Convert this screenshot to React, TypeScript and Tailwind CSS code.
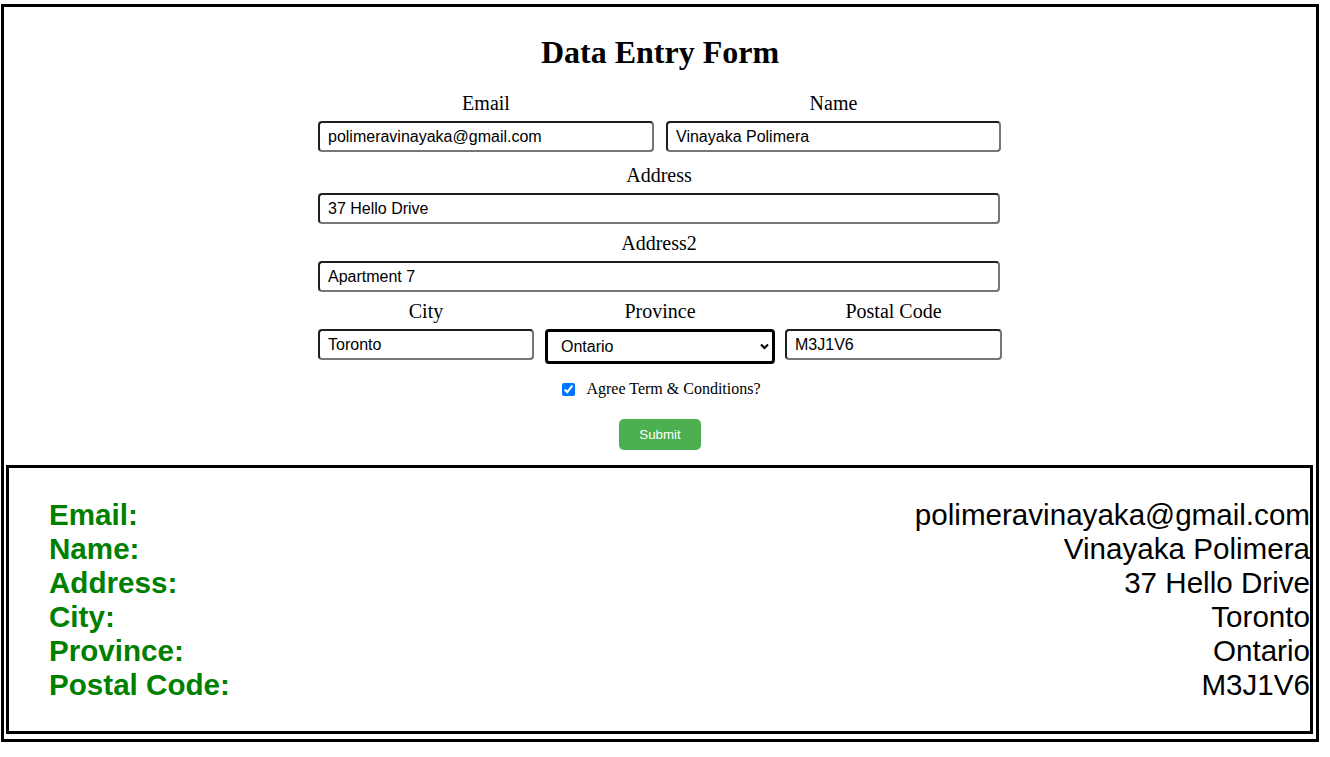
import { ReactNode } from "react";

const inputCls =
  "h-[31px] w-full rounded-[4px] border-2 border-t-[#1f1f1f] border-l-[#1f1f1f] border-r-[#767676] border-b-[#767676] bg-white px-[8px] text-[16px] text-black font-['Liberation_Sans',Arial,sans-serif] outline-none";

function Field({ label, width, children }: { label: string; width: string; children: ReactNode }) {
  return (
    <div className={`flex flex-col ${width}`}>
      <label className="text-center text-[20px] leading-[23px]">{label}</label>
      <div className="mt-[6px]">{children}</div>
    </div>
  );
}

const results = [
  ["Email:", "polimeravinayaka@gmail.com"],
  ["Name:", "Vinayaka Polimera"],
  ["Address:", "37 Hello Drive"],
  ["City:", "Toronto"],
  ["Province:", "Ontario"],
  ["Postal Code:", "M3J1V6"],
];

export default function App() {
  return (
    <div className="bg-white pt-[4px] pl-[1px] text-black font-['Liberation_Serif','Times_New_Roman',serif]">
      <div className="flex h-[738px] w-[1318px] flex-col border-[3px] border-black">
        <h1 className="mt-[27px] text-center text-[32px] font-bold leading-[37px]">Data Entry Form</h1>

        <form className="mx-auto mt-[21px] flex w-[684px] flex-col" onSubmit={(e) => e.preventDefault()}>
          <div className="flex gap-[12px]">
            <Field label="Email" width="w-[336px]">
              <input className={inputCls} defaultValue="polimeravinayaka@gmail.com" />
            </Field>
            <Field label="Name" width="w-[335px]">
              <input className={inputCls} defaultValue="Vinayaka Polimera" />
            </Field>
          </div>

          <div className="mt-[12px]">
            <Field label="Address" width="w-[682px]">
              <input className={inputCls} defaultValue="37 Hello Drive" />
            </Field>
          </div>

          <div className="mt-[8px]">
            <Field label="Address2" width="w-[682px]">
              <input className={inputCls} defaultValue="Apartment 7" />
            </Field>
          </div>

          <div className="mt-[8px] flex items-start">
            <Field label="City" width="w-[216px]">
              <input className={inputCls} defaultValue="Toronto" />
            </Field>
            <div className="ml-[11px]">
              <Field label="Province" width="w-[230px]">
                <div className="relative">
                  <select
                    defaultValue="Ontario"
                    className="h-[35px] w-full appearance-none rounded-[4px] border-[3px] border-black bg-white pl-[13px] text-[16px] text-black font-['Liberation_Sans',Arial,sans-serif] outline-none"
                  >
                    <option>Alberta</option>
                    <option>British Columbia</option>
                    <option>Manitoba</option>
                    <option>Ontario</option>
                    <option>Quebec</option>
                  </select>
                  <svg
                    className="pointer-events-none absolute right-[6px] top-[14px]"
                    width="9"
                    height="7"
                    viewBox="0 0 9 7"
                  >
                    <polyline points="1,1.5 4.5,5 8,1.5" fill="none" stroke="#000" strokeWidth="2" />
                  </svg>
                </div>
              </Field>
            </div>
            <div className="ml-[10px]">
              <Field label="Postal Code" width="w-[217px]">
                <input className={inputCls} defaultValue="M3J1V6" />
              </Field>
            </div>
          </div>

          <div className="mt-[15px] flex items-center justify-center pl-[3px]">
            <input type="checkbox" defaultChecked className="h-[13px] w-[13px]" />
            <span className="ml-[11px] text-[16px] leading-[20px]">Agree Term &amp; Conditions?</span>
          </div>

          <div className="mt-[20px] flex justify-center">
            <button
              type="submit"
              className="h-[31px] w-[82px] rounded-[5px] bg-[#4CAF50] text-[13.33px] text-white font-['Liberation_Sans',Arial,sans-serif]"
            >
              Submit
            </button>
          </div>
        </form>

        <div className="ml-[2px] mt-[15px] h-[269px] w-[1307px] border-[3px] border-black pt-[30px] pl-[40px] font-['Liberation_Sans',Arial,sans-serif]">
          {results.map(([k, v]) => (
            <div key={k} className="flex justify-between text-[29.6px] leading-[34px]">
              <span className="font-bold text-[#008000]">{k}</span>
              <span className="text-black">{v}</span>
            </div>
          ))}
        </div>
      </div>
    </div>
  );
}
